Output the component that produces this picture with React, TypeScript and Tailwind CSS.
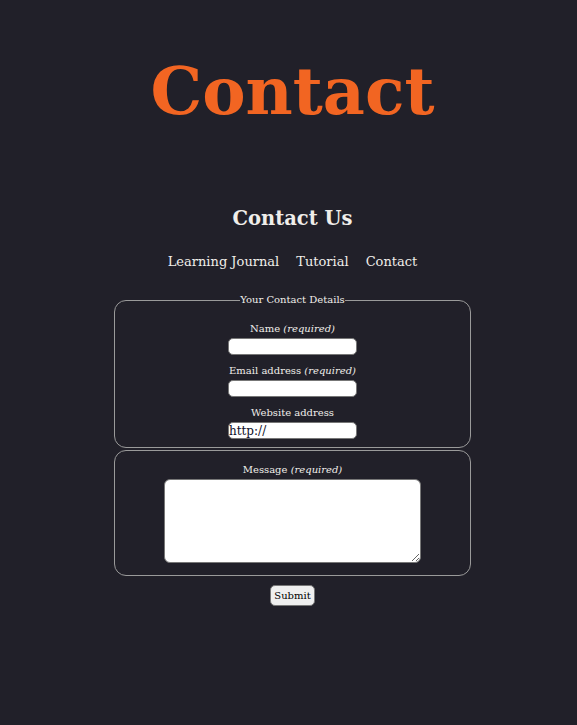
import React from 'react';

const serif = "font-['DejaVu_Serif',Georgia,serif]";

export default function App() {
    return (
        <div className={`min-h-[725px] bg-[#212029] pl-2 text-[#f0eeea] ${serif}`}>
            <header className="pt-[46px] text-center">
                <h1 className="text-[65px] font-bold leading-[90px] text-[#f26522]">Contact</h1>
                <h2 className="mt-[70px] text-[19.5px] font-bold leading-[26px]">Contact Us</h2>
                <nav className="mt-[20px] flex justify-center gap-[17px] text-[13px] leading-[20px]">
                    <a href="#">Learning Journal</a>
                    <a href="#">Tutorial</a>
                    <a href="#">Contact</a>
                </nav>
            </header>

            <form className="mx-auto mt-[21px] w-[357px] text-center text-[10px]">
                <fieldset className="rounded-[12px] border border-[#9a9a9a] px-2 pb-[8px]">
                    <legend className="mx-auto px-0 text-[10px] leading-[14px]">Your Contact Details</legend>
                    <div className="mt-[14px] flex flex-col items-center">
                        <label className="mb-[1px] leading-[16px]">
                            Name <em>(required)</em>
                        </label>
                        <input type="text" className="h-[17px] w-[129px] rounded-[5px] border border-[#777] bg-white" />
                    </div>
                    <div className="mt-[8px] flex flex-col items-center">
                        <label className="mb-[1px] leading-[16px]">
                            Email address <em>(required)</em>
                        </label>
                        <input type="email" className="h-[17px] w-[129px] rounded-[5px] border border-[#777] bg-white" />
                    </div>
                    <div className="mt-[8px] flex flex-col items-center">
                        <label className="mb-[1px] leading-[16px]">Website address</label>
                        <input
                            type="text"
                            defaultValue="http://"
                            className={`h-[17px] w-[129px] rounded-[5px] border border-[#777] bg-white px-0 text-[12px] leading-[15px] text-[#10102a] ${serif}`}
                        />
                    </div>
                </fieldset>

                <fieldset className="mt-[2px] rounded-[12px] border border-[#9a9a9a] px-2 pt-[11px] pb-[12px]">
                    <div className="flex flex-col items-center">
                        <label className="leading-[16px]">
                            Message <em>(required)</em>
                        </label>
                        <textarea className="mt-[1px] h-[84px] w-[257px] rounded-[6px] border border-[#777] bg-white" />
                    </div>
                </fieldset>

                <button
                    type="submit"
                    className={`mt-[9px] rounded-[5px] border border-[#777] bg-[#efefef] px-[3px] py-[2px] text-[10px] leading-[15px] text-black ${serif}`}
                >
                    Submit
                </button>
            </form>
        </div>
    );
}
